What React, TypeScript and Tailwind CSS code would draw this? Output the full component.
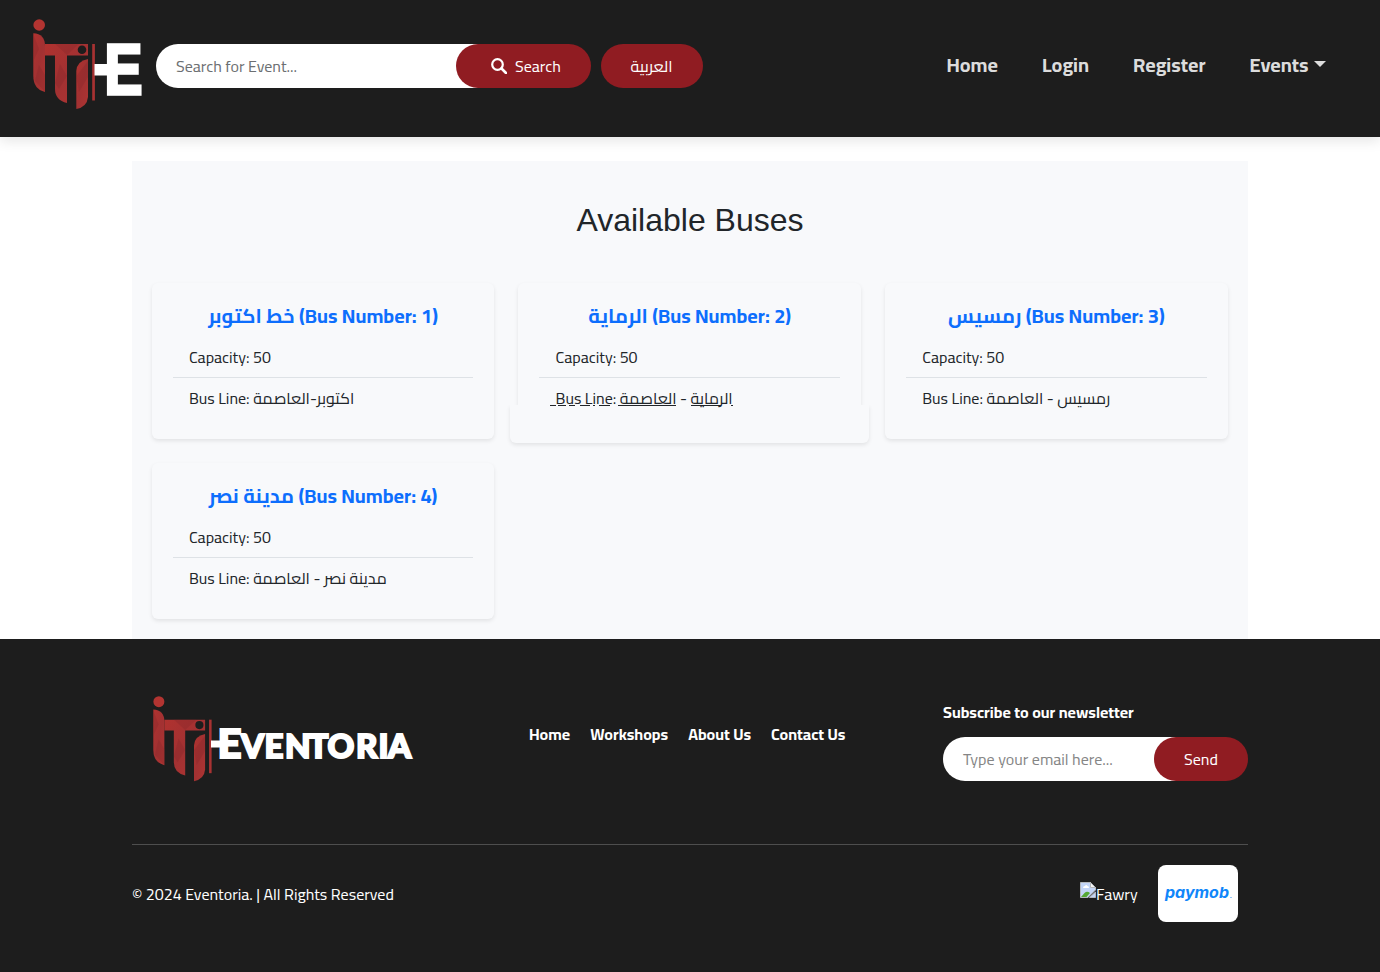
import React from "react";

function ItiMark({ id }: { id: string }) {
  return (
    <g>
      <defs>
        <linearGradient id={id} x1="0" y1="0" x2="1" y2="1">
          <stop offset="0" stopColor="#b0322f" />
          <stop offset="0.5" stopColor="#a23132" />
          <stop offset="1" stopColor="#ae3432" />
        </linearGradient>
      </defs>
      <circle cx="6.2" cy="6" r="5.8" fill="#b33431" />
      <path d="M0.3 14.3Q12 15 12 27V73Q0.3 70 0.3 57Z" fill={`url(#${id})`} />
      <path d="M12 25H55V36.5H34V84Q22 81 22 70V36.5H12Z" fill={`url(#${id})`} />
      <path d="M55 40V78Q54 88 43.3 90V52Q44 42 55 40Z" fill={`url(#${id})`} />
      <path d="M0.3 15L6 30L0.3 42ZM6 46L12 56V73L2 62ZM22 25L34 36L46 25ZM27 45L34 57L26 70L22 64ZM43.3 57L55 42V58L46 73Z" fill="#87292b" opacity=".35" />
      <circle cx="49" cy="30.7" r="4.3" fill="#1d1d1d" />
      <rect x="59.2" y="25" width="2.7" height="56.5" fill="#a83232" />
    </g>
  );
}

function HeaderLogo() {
  return (
    <svg width="110" height="92" viewBox="0 0 110 92" className="block shrink-0">
      <ItiMark id="mark-header" />
      <rect x="61.5" y="45" width="16" height="11.5" fill="#fff" />
      <text transform="translate(71.6 75.3) scale(.8 1)" fontFamily="Liberation Sans" fontWeight="700" fontSize="71" fill="#fff" stroke="#fff" strokeWidth="3.4">E</text>
    </svg>
  );
}

function FooterLogo() {
  return (
    <svg width="262" height="88" viewBox="0 0 262 88" className="block shrink-0">
      <g transform="scale(.947)"><ItiMark id="mark-footer" /></g>
      <rect x="58" y="44.5" width="12" height="7" fill="#fff" />
      <g fontFamily="Lato" fontWeight="900" fill="#fff" stroke="#fff" strokeWidth="2">
        <text x="64.5" y="61.5" fontSize="39" textLength="24" lengthAdjust="spacingAndGlyphs">E</text>
        <text x="88 111.5 132 155.5 174.5 203 225.5 235" y="61.5" fontSize="33">VENTORIA</text>
      </g>
    </svg>
  );
}

function BrokenImage() {
  return (
    <svg width="16" height="16" viewBox="0 0 16 16" className="block shrink-0">
      <path d="M.5.5H10.5L15.5 5.5V8L8 15.5H.5Z" fill="#c3d5f7" stroke="#b4b8bd" />
      <path d="M3 6Q3 4 5 4Q6 2 7.5 4Q9 4 9 6Z" fill="#fff" />
      <path d="M1 15L4.5 11Q7 8.5 10 11L6.5 15Z" fill="#55a834" />
      <path d="M10.5.5V5.5H15.5Z" fill="#f4f4f4" stroke="#b4b8bd" />
      <path d="M15.5 10V15.5H9.5Z" fill="#c3d5f7" stroke="#b4b8bd" />
    </svg>
  );
}

const buses = [
  { n: 1, name: "خط اكتوبر", line: "اكتوبر-العاصمة" },
  { n: 2, name: "الرماية", line: "الرماية - العاصمة" },
  { n: 3, name: "رمسيس", line: "رمسيس - العاصمة" },
  { n: 4, name: "مدينة نصر", line: "مدينة نصر - العاصمة" },
];

function BusCard({ n, name, line }: { n: number; name: string; line: string }) {
  const raised = n === 2;
  return (
    <div className={`relative h-[156px] rounded-md px-[21px] pt-[21px] ${raised ? "" : "shadow-[0_2px_4px_rgba(0,0,0,0.09)]"}`}>
      {raised && (
        <>
          <div className="absolute inset-x-0 top-0 h-[122px] rounded-t-md shadow-[0_2px_4px_rgba(0,0,0,0.09)] [clip-path:inset(-4px_-6px_0_-6px)]" />
          <div className="absolute -left-[8.5px] -right-[8px] top-[122px] h-[38px] rounded-b-md bg-[#f8f9fb] shadow-[0_2px_4px_rgba(0,0,0,0.09)] [clip-path:inset(0_-6px_-8px_-6px)]" />
          <svg className="absolute left-[31.6px] top-[122px]" width="184" height="1" viewBox="0 0 184 1">
            <path d="M0 .5H6M8 .5H16M19 .5H25M30 .5H40M43 .5H45M49 .5H60M68 .5H126M141 .5H171M181 .5H183" stroke="#212529" />
          </svg>
        </>
      )}
      <h5 className="relative h-[24px] whitespace-nowrap text-center text-[20px] font-bold leading-[24px] text-[#0d6efd]">
        <bdi>{name}</bdi> (Bus Number: {n})
      </h5>
      <ul className="relative mt-[8px] whitespace-nowrap text-base text-[#212529]">
        <li className="h-[42px] border-b border-[#dee2e6] pl-[16.2px] pt-[9px] leading-6">Capacity: 50</li>
        <li className="h-[41px] pl-[16.2px] pt-2 leading-6">Bus Line: <bdi>{line}</bdi></li>
      </ul>
    </div>
  );
}

export default function App() {
  return (
    <div className="flex h-[972px] w-[1380px] flex-col overflow-hidden bg-white font-['Cairo','Roboto','DejaVu_Sans',sans-serif]">
      <header className="relative flex h-[137px] shrink-0 bg-[#1d1d1d] pl-[33px] pr-[54px] shadow-[0_4px_12px_rgba(0,0,0,0.1)]">
        <div className="mt-[19px]"><HeaderLogo /></div>
        <div className="ml-[13px] mt-[44px] flex h-11 w-[435px] shrink-0 text-base">
          <span className="w-[330px] shrink-0 rounded-l-full bg-white pl-5 leading-[45px] text-[#6c6f72]">Search for Event...</span>
          <button className="-ml-[30px] flex w-[135px] shrink-0 items-center rounded-full bg-[#901c22] pl-[35px] text-white">
            <svg width="16" height="16" viewBox="0 0 16 16" fill="none" stroke="#fff" className="mr-2">
              <circle cx="6.5" cy="6.5" r="5.3" strokeWidth="2.2" />
              <path d="M10.5 10.5L15 15" strokeWidth="2.6" strokeLinecap="round" />
            </svg>
            Search
          </button>
        </div>
        <button className="ml-[10px] mt-[44px] h-11 w-[102px] rounded-full bg-[#901c22] pr-px text-base text-white">العربية</button>
        <nav className="ml-auto mt-[50px] flex h-[30px] items-center gap-[44px] whitespace-nowrap text-[20px] font-bold leading-[30px] text-[#dcdcdc]">
          <a>Home</a>
          <a>Login</a>
          <a>Register</a>
          <a className="flex w-[76.5px] items-center justify-between">Events<span className="-mt-[3px] border-x-[6px] border-t-[6px] border-x-transparent border-t-[#dcdcdc]" /></a>
        </nav>
      </header>

      <main className="mx-auto mt-6 h-[478px] w-[1116px] shrink-0 bg-[#f8f9fb] px-5 pt-[40px]">
        <h2 className="h-[82px] text-center font-['Liberation_Sans',sans-serif] text-[32px] leading-[38px] text-[#212529]">Available Buses</h2>
        <div className="-ml-[0.3px] mr-[0.3px] grid grid-cols-3 gap-6">
          {buses.map((b) => <BusCard key={b.n} {...b} />)}
        </div>
      </main>

      <footer className="h-[333px] shrink-0 bg-[#1d1d1d] px-[132px] text-white">
        <div className="flex h-[206px] border-b border-[#4e4e4e]">
          <div className="ml-[21px] mt-[57px] w-[376px]"><FooterLogo /></div>
          <nav className="mt-[83px] flex gap-5 whitespace-nowrap text-base font-bold leading-6">
            <a>Home</a>
            <a>Workshops</a>
            <a>About Us</a>
            <a>Contact Us</a>
          </nav>
          <div className="ml-auto mt-[61px] w-[305px]">
            <p className="text-base font-bold leading-6">Subscribe to our newsletter</p>
            <div className="mt-[13px] flex h-11 text-base leading-[45px]">
              <span className="w-[241px] shrink-0 rounded-l-full bg-white pl-5 text-[#858585]">Type your email here...</span>
              <button className="-ml-[30px] w-[94px] shrink-0 rounded-full bg-[#901c22]">Send</button>
            </div>
          </div>
        </div>
        <div className="flex items-start pt-5">
          <p className="mt-[17px] text-base leading-6">© 2024 Eventoria. | All Rights Reserved</p>
          <div className="ml-auto mt-[17px] flex w-[58px] text-base leading-6"><BrokenImage />Fawry</div>
          <div className="ml-5 mr-[10px] flex h-[57px] w-20 items-center justify-center rounded-lg bg-white">
            <svg width="70" height="24" viewBox="0 0 70 24" overflow="visible">
              <text x="2" y="16" textLength="64" lengthAdjust="spacingAndGlyphs" fontFamily="Inter" fontWeight="700" fontStyle="italic" fontSize="15" fill="#0f86fa">paymob</text>
              <circle cx="68" cy="15.5" r=".6" fill="#1686f5" />
            </svg>
          </div>
        </div>
      </footer>
    </div>
  );
}
